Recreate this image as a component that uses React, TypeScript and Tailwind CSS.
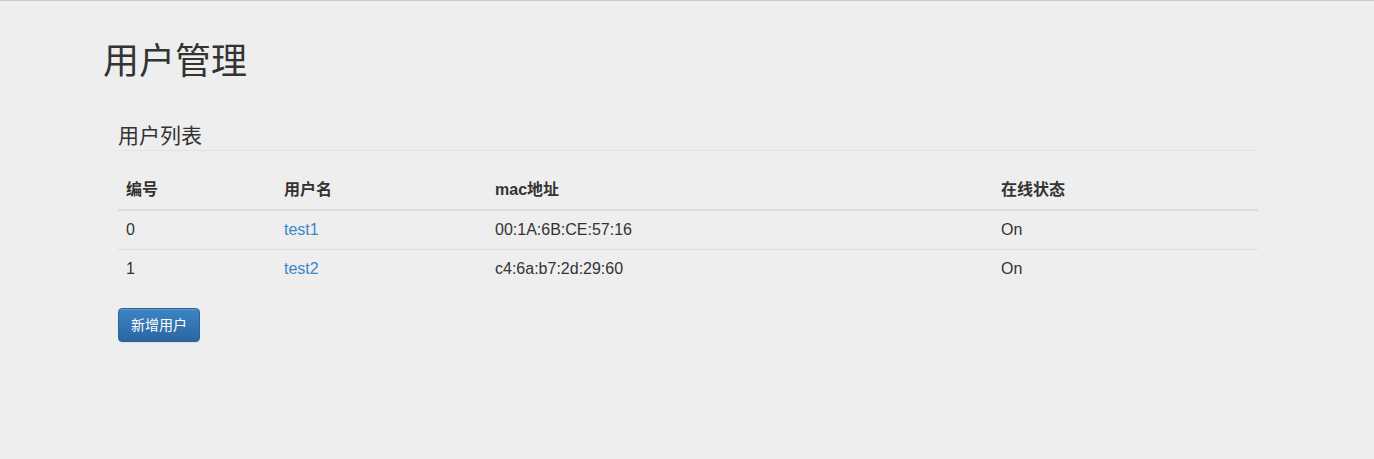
import React from 'react';

const users = [
  { id: 0, name: 'test1', mac: '00:1A:6B:CE:57:16', status: 'On' },
  { id: 1, name: 'test2', mac: 'c4:6a:b7:2d:29:60', status: 'On' },
];

export default function App() {
  return (
    <div
      className="min-h-[459px] bg-[#eeeeee] border-t border-[#c8c8c8] text-[14px] leading-[20px] text-[#333333]"
      style={{ fontFamily: '"Liberation Sans", "Noto Sans CJK SC", sans-serif' }}
    >
      <div className="ml-[103px] w-[1170px]">
        <h1 className="mt-[41px] mb-[20px] text-[36px] leading-[40px] font-normal">用户管理</h1>
        <div className="px-[15px]">
          <div className="mt-[44px] mb-[20px] pb-[4px] border-b border-[#e2e2e2] text-[21px] leading-[20px]">用户列表</div>
          <table className="w-full border-collapse mb-[20px] text-[16px] leading-[22px]">
            <thead>
              <tr className="text-left">
                <th className="w-[158px] p-[8px] font-bold border-b-2 border-[#dddddd]">编号</th>
                <th className="w-[211px] p-[8px] font-bold border-b-2 border-[#dddddd]">用户名</th>
                <th className="w-[506px] p-[8px] font-bold border-b-2 border-[#dddddd]">mac地址</th>
                <th className="p-[8px] font-bold border-b-2 border-[#dddddd]">在线状态</th>
              </tr>
            </thead>
            <tbody>
              {users.map((u, i) => (
                <tr key={u.id}>
                  <td className={`p-[8px] ${i > 0 ? 'border-t border-[#dddddd]' : ''}`}>{u.id}</td>
                  <td className={`p-[8px] ${i > 0 ? 'border-t border-[#dddddd]' : ''}`}>
                    <a className="text-[#3a87c9]" href="#">{u.name}</a>
                  </td>
                  <td className={`p-[8px] ${i > 0 ? 'border-t border-[#dddddd]' : ''}`}>{u.mac}</td>
                  <td className={`p-[8px] ${i > 0 ? 'border-t border-[#dddddd]' : ''}`}>{u.status}</td>
                </tr>
              ))}
            </tbody>
          </table>
          <button className="h-[34px] px-[12px] rounded-[4px] border border-[#2b6399] bg-gradient-to-b from-[#3c85c5] to-[#2b66a2] text-white text-[14px] leading-[20px] shadow-[inset_0_1px_0_rgba(255,255,255,0.15),0_1px_1px_rgba(0,0,0,0.075)]">
            新增用户
          </button>
        </div>
      </div>
    </div>
  );
}
